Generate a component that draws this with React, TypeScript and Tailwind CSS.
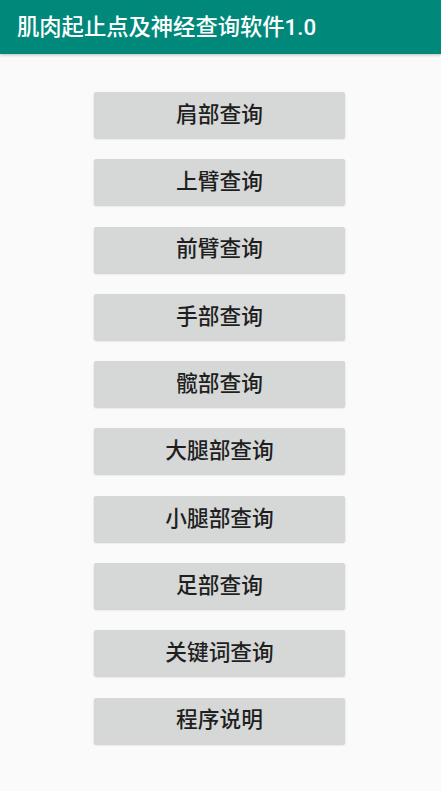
const items = [
  "肩部查询",
  "上臂查询",
  "前臂查询",
  "手部查询",
  "髋部查询",
  "大腿部查询",
  "小腿部查询",
  "足部查询",
  "关键词查询",
  "程序说明",
];

export default function App() {
  return (
    <div
      className="min-h-[791px] bg-[#fafafa]"
      style={{ fontFamily: 'Roboto, "Noto Sans CJK SC", "Noto Sans", sans-serif' }}
    >
      {/* Toolbar */}
      <div className="h-[54px] bg-[#00897b] flex items-center pl-[17px] shadow-[0_1px_3px_rgba(0,0,0,0.25)]">
        <h1 className="text-white text-[22.3px] font-medium leading-none">
          肌肉起止点及神经查询软件1.0
        </h1>
      </div>

      {/* Menu buttons */}
      <div className="flex flex-col items-center pt-[38px] gap-[21.3px]">
        {items.map((label) => (
          <button
            key={label}
            className="w-[251px] h-[46px] -translate-x-[1px] bg-[#d6d7d7] rounded-[2px] text-[#1f1f1f] text-[21.7px] font-medium shadow-[0_1px_2px_rgba(0,0,0,0.2)] flex items-center justify-center"
          >
            {label}
          </button>
        ))}
      </div>
    </div>
  );
}
